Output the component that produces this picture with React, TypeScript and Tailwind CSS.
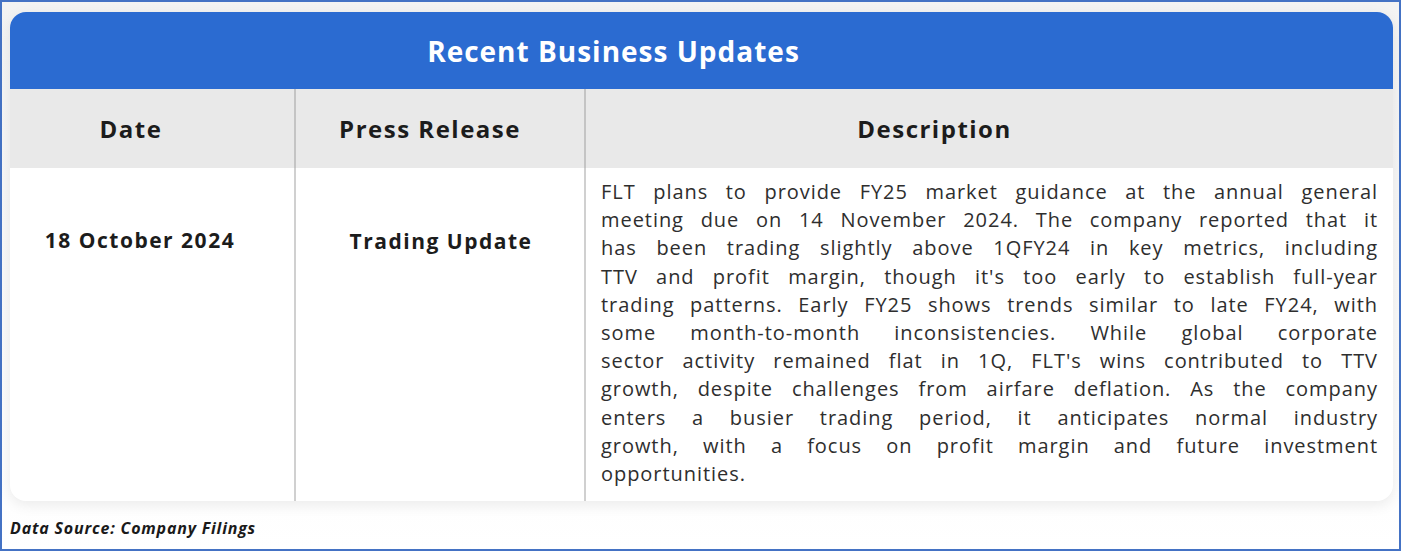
const LINES = [
  'FLT plans to provide FY25 market guidance at the annual general',
  'meeting due on 14 November 2024. The company reported that it',
  'has been trading slightly above 1QFY24 in key metrics, including',
  "TTV and profit margin, though it's too early to establish full-year",
  'trading patterns. Early FY25 shows trends similar to late FY24, with',
  'some month-to-month inconsistencies. While global corporate',
  "sector activity remained flat in 1Q, FLT's wins contributed to TTV",
  'growth, despite challenges from airfare deflation. As the company',
  'enters a busier trading period, it anticipates normal industry',
  'growth, with a focus on profit margin and future investment',
  'opportunities.',
];

export default function App() {
  return (
    <div
      className="w-[1401px] h-[551px] border-2 border-[#4472c4] bg-gradient-to-b from-[#f3f3f3] to-white"
      style={{ fontFamily: '"Open Sans", "Liberation Sans", sans-serif' }}
    >
      <div className="pt-[10px] pl-[8px] w-[1391px]">
        <div className="rounded-[16px] bg-white shadow-[0_4px_14px_rgba(0,0,0,0.08)] overflow-hidden">
          <div className="h-[77px] bg-[#2b6bd1] flex items-center justify-center pr-[176px]">
            <span className="text-white font-bold text-[28px] tracking-[1px]">Recent Business Updates</span>
          </div>
          <div className="grid grid-cols-[286px_290px_1fr]">
            <div className="h-[79px] bg-[#e9e9e9] border-r-2 border-[#c4c4c4] flex items-center justify-center pr-[42px] text-[24px] tracking-[1.5px] font-bold text-[#1c1c1c]">Date</div>
            <div className="h-[79px] bg-[#e9e9e9] border-r-2 border-[#c4c4c4] flex items-center justify-center pr-[20px] text-[24px] tracking-[1.5px] font-bold text-[#1c1c1c]">Press Release</div>
            <div className="h-[79px] bg-[#e9e9e9] flex items-center justify-center pr-[110px] text-[24px] tracking-[1.5px] font-bold text-[#1c1c1c]">Description</div>

            <div className="h-[333px] border-r-2 border-[#d0d0d0] pt-[58px] pr-[24px] text-center text-[21px] tracking-[1.5px] leading-[28px] font-bold text-[#1c1c1c]">18 October 2024</div>
            <div className="h-[333px] border-r-2 border-[#d0d0d0] pt-[59px] pl-[2px] text-center text-[21px] tracking-[1.5px] leading-[28px] font-bold text-[#1c1c1c]">Trading Update</div>
            <div className="h-[333px] pt-[10px] pl-[15px] pr-[15px] text-[20px] tracking-[0.95px] leading-[28.2px] text-[#2e2e2e]">
              {LINES.map((line, i) => (
                <div
                  key={i}
                  className={i < LINES.length - 1 ? 'text-justify [text-align-last:justify]' : 'text-left'}
                >
                  {line}
                </div>
              ))}
            </div>
          </div>
        </div>
      </div>
      <div className="pl-[8px] pt-[15px] text-[16px] tracking-[0.8px] font-bold italic text-[#1a1a1a]">Data Source: Company Filings</div>
    </div>
  );
}
